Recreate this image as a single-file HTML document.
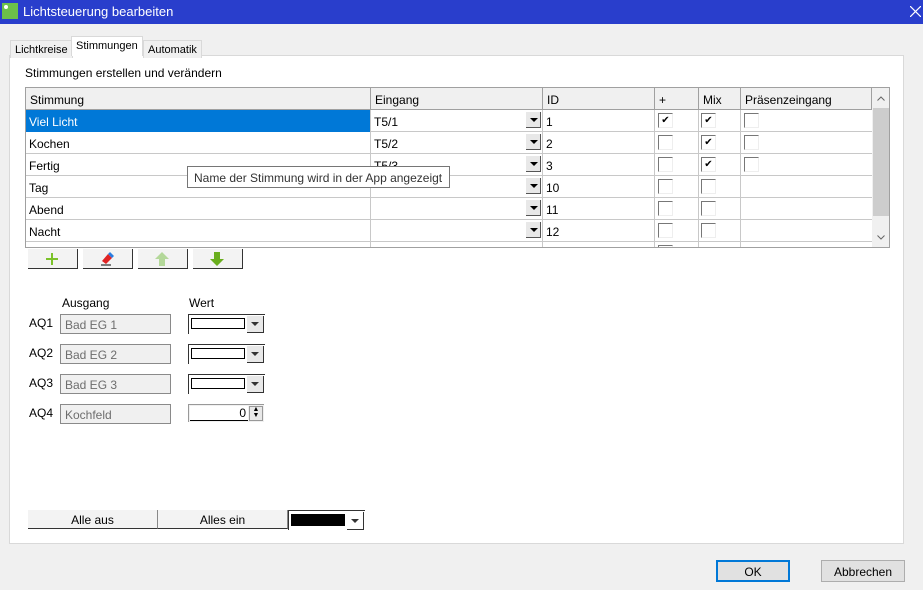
<!DOCTYPE html>
<html><head><meta charset="utf-8"><style>
*{box-sizing:border-box;margin:0;padding:0}
body{width:923px;height:590px;background:#f0f0f0;font-family:"Liberation Sans",sans-serif;font-size:12px;color:#000;position:relative;overflow:hidden}
.a{position:absolute}
.title{left:0;top:0;width:923px;height:24px;background:#293ecc;color:#fff;font-size:13px}
.panel{left:9px;top:55px;width:895px;height:489px;background:#fff;border:1px solid #d9d9d9}
.tab{top:38px;height:18px;border:1px solid #d9d9d9;border-bottom:none;background:#f0f0f0;padding:3px 4px;font-size:11px}
.grid{left:25px;top:87px;width:865px;height:161px;border:1px solid #a0a0a0;background:#fff;overflow:hidden}
.hd{top:0;height:22px;background:#f0f0f0;border-right:1px solid #a0a0a0;border-bottom:1px solid #a0a0a0;padding:5px 4px}
.row{left:0;width:846px;height:22px;border-bottom:1px solid #c8c8c8}
.cell{top:0;height:22px;border-right:1px solid #c8c8c8;padding:5px 3px}
.dd{width:15px;height:16px;background:#e8e8e8;border-right:1px solid #555;border-bottom:1px solid #555;top:2px;left:155px}
.dd:after{content:"";position:absolute;left:4px;top:6px;border:4px solid transparent;border-top:4px solid #000;border-bottom:none}
.cb{width:15px;height:15px;border-top:1px solid #777;border-left:1px solid #777;border-right:1px solid #eee;border-bottom:1px solid #eee;background:#fff;top:3px;font-size:10px;line-height:13px;text-align:center}
.btn{top:249px;width:50px;height:20px;background:#f3f3f3;border-right:1px solid #333;border-bottom:1px solid #333}
.tb{left:60px;width:111px;height:20px;border:1px solid #8a8a8a;background:#f0f0f0;color:#6d6d6d;padding:3px 4px}
.lbl{left:29px}
.cbx{left:188px;width:77px;height:20px}
.cbx .in{position:absolute;left:3px;top:4px;width:54px;height:11px;border:1px solid #000}
.cbx .ar{position:absolute;left:59px;top:2px;width:17px;height:17px;background:#e8e8e8;border-right:1px solid #333;border-bottom:1px solid #333}
.cbx .ar:after{content:"";position:absolute;left:4px;top:6px;border:4px solid transparent;border-top:4px solid #333;border-bottom:none}
.cbx .l{position:absolute;left:0;top:0;width:1px;height:20px;background:#333}
.cbx .t{position:absolute;left:0;top:0;width:77px;height:1px;background:#333}
</style></head><body>
<div class="a title">
  <div class="a" style="left:2px;top:3px;width:16px;height:16px;background:#6cc04a"></div>
  <div class="a" style="left:4px;top:5px;width:4px;height:4px;background:#fff;border-radius:2px"></div>
  <div class="a" style="left:23px;top:4px">Lichtsteuerung bearbeiten</div>
  <svg class="a" style="left:910px;top:6px" width="11" height="11"><path d="M0 0L11 11M11 0L0 11" stroke="#fff" stroke-width="1.2"/></svg>
</div>
<div class="a panel"></div>
<div class="a tab" style="left:10px;top:40px">Lichtkreise</div>
<div class="a tab" style="left:71px;top:36px;height:20px;background:#fff;z-index:2">Stimmungen</div>
<div class="a tab" style="left:143px;top:40px">Automatik</div>
<div class="a" style="left:25px;top:66px">Stimmungen erstellen und verändern</div>

<div class="a grid">
  <div class="a hd" style="left:0;width:345px">Stimmung</div>
  <div class="a hd" style="left:345px;width:172px">Eingang</div>
  <div class="a hd" style="left:517px;width:112px">ID</div>
  <div class="a hd" style="left:629px;width:44px">+</div>
  <div class="a hd" style="left:673px;width:42px">Mix</div>
  <div class="a hd" style="left:715px;width:131px">Präsenzeingang</div>
  <div class="a" style="left:846px;top:0;width:18px;height:161px;background:#f0f0f0"></div>
  <div class="a" style="left:847px;top:20px;width:16px;height:108px;background:#cdcdcd"></div>
  <svg class="a" style="left:851px;top:8px" width="8" height="5"><path d="M0.5 4.5L4 1L7.5 4.5" stroke="#666" fill="none"/></svg>
  <svg class="a" style="left:851px;top:147px" width="8" height="5"><path d="M0.5 0.5L4 4L7.5 0.5" stroke="#666" fill="none"/></svg>
  <div class="a row" style="top:22px"><div class="a cell" style="left:0;width:345px;background:#0078d7;color:#fff">Viel Licht</div><div class="a cell" style="left:345px;width:172px">T5/1<div class="a dd"></div></div><div class="a cell" style="left:517px;width:112px">1</div><div class="a cell" style="left:629px;width:44px"><div class="a cb" style="left:3px">✔</div></div><div class="a cell" style="left:673px;width:42px"><div class="a cb" style="left:2px">✔</div></div><div class="a cell" style="left:715px;width:131px;border:none"><div class="a cb" style="left:3px"></div></div></div>
  <div class="a row" style="top:44px"><div class="a cell" style="left:0;width:345px">Kochen</div><div class="a cell" style="left:345px;width:172px">T5/2<div class="a dd"></div></div><div class="a cell" style="left:517px;width:112px">2</div><div class="a cell" style="left:629px;width:44px"><div class="a cb" style="left:3px"></div></div><div class="a cell" style="left:673px;width:42px"><div class="a cb" style="left:2px">✔</div></div><div class="a cell" style="left:715px;width:131px;border:none"><div class="a cb" style="left:3px"></div></div></div>
  <div class="a row" style="top:66px"><div class="a cell" style="left:0;width:345px">Fertig</div><div class="a cell" style="left:345px;width:172px">T5/3<div class="a dd"></div></div><div class="a cell" style="left:517px;width:112px">3</div><div class="a cell" style="left:629px;width:44px"><div class="a cb" style="left:3px"></div></div><div class="a cell" style="left:673px;width:42px"><div class="a cb" style="left:2px">✔</div></div><div class="a cell" style="left:715px;width:131px;border:none"><div class="a cb" style="left:3px"></div></div></div>
  <div class="a row" style="top:88px"><div class="a cell" style="left:0;width:345px">Tag</div><div class="a cell" style="left:345px;width:172px"><div class="a dd"></div></div><div class="a cell" style="left:517px;width:112px">10</div><div class="a cell" style="left:629px;width:44px"><div class="a cb" style="left:3px"></div></div><div class="a cell" style="left:673px;width:42px"><div class="a cb" style="left:2px"></div></div></div>
  <div class="a row" style="top:110px"><div class="a cell" style="left:0;width:345px">Abend</div><div class="a cell" style="left:345px;width:172px"><div class="a dd"></div></div><div class="a cell" style="left:517px;width:112px">11</div><div class="a cell" style="left:629px;width:44px"><div class="a cb" style="left:3px"></div></div><div class="a cell" style="left:673px;width:42px"><div class="a cb" style="left:2px"></div></div></div>
  <div class="a row" style="top:132px"><div class="a cell" style="left:0;width:345px">Nacht</div><div class="a cell" style="left:345px;width:172px"><div class="a dd"></div></div><div class="a cell" style="left:517px;width:112px">12</div><div class="a cell" style="left:629px;width:44px"><div class="a cb" style="left:3px"></div></div><div class="a cell" style="left:673px;width:42px"><div class="a cb" style="left:2px"></div></div></div>
  <div class="a row" style="top:154px;border:none"><div class="a cell" style="left:0;width:345px"></div><div class="a cell" style="left:345px;width:172px"></div><div class="a cell" style="left:517px;width:112px"></div><div class="a cell" style="left:629px;width:44px"><div class="a cb" style="left:3px"></div></div><div class="a cell" style="left:673px;width:42px"></div></div>
</div>
<div class="a" style="left:187px;top:166px;width:263px;height:22px;background:#fff;border:1px solid #767676;padding:4px 6px;color:#333">Name der Stimmung wird in der App angezeigt</div>

<div class="a btn" style="left:28px"><svg class="a" style="left:18px;top:4px" width="12" height="12"><path d="M6 0V12M0 6H12" stroke="#7cc22a" stroke-width="2"/></svg></div>
<div class="a btn" style="left:83px"><svg class="a" style="left:16px;top:2px" width="18" height="16"><path d="M3 10L9 3L13 7L7 13Z" fill="#e02424"/><path d="M9 3L11 1L15 5L13 7Z" fill="#2a7de1"/><path d="M2 14H12" stroke="#555" stroke-width="1.5"/></svg></div>
<div class="a btn" style="left:138px"><svg class="a" style="left:17px;top:3px" width="14" height="14"><path d="M7 0L14 7H10V14H4V7H0Z" fill="#b4d89a"/></svg></div>
<div class="a btn" style="left:193px"><svg class="a" style="left:17px;top:3px" width="14" height="14"><path d="M7 14L14 7H10V0H4V7H0Z" fill="#6aae1e"/></svg></div>

<div class="a" style="left:62px;top:296px">Ausgang</div>
<div class="a" style="left:189px;top:296px">Wert</div>
<div class="a lbl" style="top:316px">AQ1</div><div class="a tb" style="top:314px">Bad EG 1</div>
<div class="a lbl" style="top:346px">AQ2</div><div class="a tb" style="top:344px">Bad EG 2</div>
<div class="a lbl" style="top:376px">AQ3</div><div class="a tb" style="top:374px">Bad EG 3</div>
<div class="a lbl" style="top:406px">AQ4</div><div class="a tb" style="top:404px">Kochfeld</div>
<div class="a cbx" style="top:314px"><div class="l"></div><div class="t"></div><div class="in"></div><div class="ar"></div></div>
<div class="a cbx" style="top:344px"><div class="l"></div><div class="t"></div><div class="in"></div><div class="ar"></div></div>
<div class="a cbx" style="top:374px"><div class="l"></div><div class="t"></div><div class="in"></div><div class="ar"></div></div>
<div class="a" style="left:188px;top:404px;width:76px;height:18px;background:#f0f0f0;border-top:1px solid #999;border-left:1px solid #999">
  <div class="a" style="left:1px;top:1px;width:58px;height:15px;background:#fff;border-bottom:1px solid #000;text-align:right;padding-right:2px;font-size:12px;line-height:14px">0</div>
  <div class="a" style="left:60px;top:1px;width:14px;height:15px;background:#e8e8e8;border:1px solid #999;font-size:7px;text-align:center;line-height:6px">▲<br>▼</div>
</div>

<div class="a" style="left:28px;top:510px;width:130px;height:19px;background:#f3f3f3;border-bottom:1px solid #333;border-right:1px solid #888;text-align:center;padding-top:3px">Alle aus</div>
<div class="a" style="left:158px;top:510px;width:130px;height:19px;background:#f3f3f3;border-bottom:1px solid #333;border-right:1px solid #888;text-align:center;padding-top:3px">Alles ein</div>
<div class="a" style="left:288px;top:510px;width:77px;height:20px"><div class="a" style="left:0;top:0;width:1px;height:20px;background:#333"></div><div class="a" style="left:0;top:0;width:77px;height:1px;background:#333"></div><div class="a" style="left:3px;top:4px;width:54px;height:12px;background:#000"></div><div class="a" style="left:59px;top:2px;width:17px;height:18px;background:#fff;border-right:1px solid #333;border-bottom:1px solid #333"><div class="a" style="left:4px;top:7px;border:4px solid transparent;border-top:4px solid #333;border-bottom:none"></div></div></div>

<div class="a" style="left:716px;top:560px;width:74px;height:22px;background:#e1e1e1;border:2px solid #0078d7;text-align:center;padding-top:3px">OK</div>
<div class="a" style="left:821px;top:560px;width:84px;height:22px;background:#e1e1e1;border:1px solid #adadad;text-align:center;padding-top:4px">Abbrechen</div>
</body></html>
